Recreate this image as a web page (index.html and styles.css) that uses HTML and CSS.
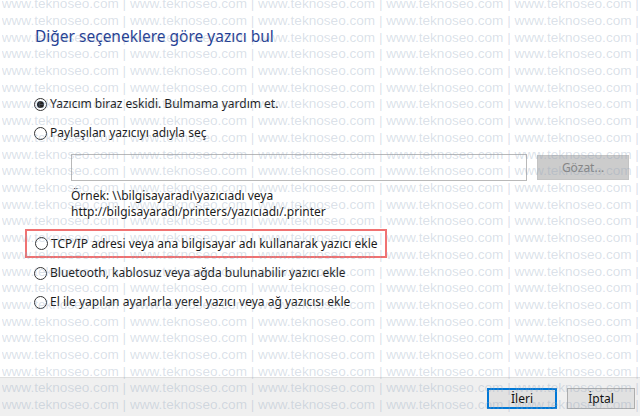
FILE: index.html
```html
<!DOCTYPE html>
<html lang="tr">
<head>
  <meta charset="UTF-8" />
  <title>Yazıcı ekle</title>
  <link rel="stylesheet" href="styles.css">
</head>
<body>

  <div class="dialog">
    <!-- CONTENT -->
    <div class="content">
      <h1 class="title">Diğer seçeneklere göre yazıcı bul</h1>

      <label class="option first">
        <span class="radio checked"></span>
        <span>Yazıcım biraz eskidi. Bulmama yardım et.</span>
      </label>
      <label class="option second">
        <span class="radio"></span>
        <span>Paylaşılan yazıcıyı adıyla seç</span>
      </label>

      <div class="share">
        <div class="share-row">
          <div class="textbox"></div>
          <button class="browse">Gözat...</button>
        </div>
        <p class="example">Örnek: \\bilgisayaradı\yazıcıadı veya<br>http://bilgisayaradı/printers/yazıcıadı/.printer</p>
      </div>

      <label class="option marked">
        <span class="radio"></span>
        <span>TCP/IP adresi veya ana bilgisayar adı kullanarak yazıcı ekle</span>
      </label>
      <label class="option bluetooth">
        <span class="radio"></span>
        <span>Bluetooth, kablosuz veya ağda bulunabilir yazıcı ekle</span>
      </label>
      <label class="option manual">
        <span class="radio"></span>
        <span>El ile yapılan ayarlarla yerel yazıcı veya ağ yazıcısı ekle</span>
      </label>
    </div>

    <!-- FOOTER -->
    <div class="footer">
      <button class="btn primary">İleri</button>
      <button class="btn">İptal</button>
    </div>
  </div>

  <!-- WATERMARK -->
  <div class="watermark" id="watermark"></div>

  <script>
    const wm = document.getElementById('watermark');
    const row = 'www.teknoseo.com | '.repeat(6);
    for (let i = 0; i < 26; i++) {
      const line = document.createElement('div');
      line.textContent = row;
      wm.appendChild(line);
    }
  </script>
</body>
</html>
```

FILE: styles.css
```css
/* RESET */
*, *::before, *::after {
  box-sizing: border-box;
  margin: 0;
  padding: 0;
}

body {
  font-family: 'Noto Sans', 'Open Sans', sans-serif;
  font-size: 12px;
  color: #1a1a1a;
  background: #fff;
  width: 640px;
  height: 416px;
  overflow: hidden;
  position: relative;
}

.dialog {
  display: flex;
  flex-direction: column;
  height: 416px;
}

/* CONTENT */
.content {
  flex: 1;
  padding: 24px 0 0 34px;
}

.title {
  font-size: 15.5px;
  font-weight: 400;
  line-height: 24px;
  color: #1e3c92;
  margin-left: 1px;
}

.option {
  display: flex;
  align-items: center;
  gap: 3px;
  height: 20px;
  line-height: 20px;
  white-space: nowrap;
}

.option.first { margin-top: 46px; }
.option.second { margin-top: 9px; }

.radio {
  width: 13px;
  height: 13px;
  border: 1px solid #333;
  border-radius: 50%;
  background: #fff;
  display: flex;
  justify-content: center;
  align-items: center;
  flex-shrink: 0;
}

.radio.checked::after {
  content: '';
  width: 7px;
  height: 7px;
  border-radius: 50%;
  background: #222;
}

/* SHARE NAME */
.share {
  padding-left: 37px;
  margin-top: 11px;
}

.share-row {
  display: flex;
  align-items: center;
  gap: 10px;
}

.textbox {
  width: 456px;
  height: 27px;
  border: 1px solid #b9b9b9;
  background: #fff;
}

.browse {
  width: 92px;
  height: 25px;
  background: #cccccc;
  border: 1px solid #c4c4c4;
  color: #858585;
  font-family: inherit;
  font-size: 12px;
}

.example {
  margin-top: 7px;
  line-height: 16px;
}

/* HIGHLIGHTED OPTION */
.option.marked {
  margin: 9px 0 0 -9px;
  width: 362px;
  height: 29px;
  padding-left: 8px;
  border: 2px solid #f07272;
}

.option.bluetooth { margin-top: 5px; }
.option.manual { margin-top: 9px; }

/* FOOTER */
.footer {
  height: 39px;
  border-top: 1px solid #dfdfdf;
  background: #f0f0f0;
  display: flex;
  justify-content: flex-end;
  align-items: flex-start;
  gap: 10px;
  padding: 10px 5px 0 0;
}

.btn {
  width: 68px;
  height: 21px;
  background: #e1e1e1;
  border: 1px solid #adadad;
  font-family: inherit;
  font-size: 12px;
  color: #111;
}

.btn.primary {
  width: 70px;
  border: 2px solid #0078d7;
}

/* WATERMARK */
.watermark {
  position: absolute;
  top: -3.75px;
  left: 1.7px;
  right: 0;
  bottom: 0;
  overflow: hidden;
  pointer-events: none;
  font-family: 'Liberation Sans', Arial, sans-serif;
  font-size: 13.6px;
  line-height: 16.7px;
  white-space: pre;
  color: rgba(140, 160, 185, 0.33);
}
```
